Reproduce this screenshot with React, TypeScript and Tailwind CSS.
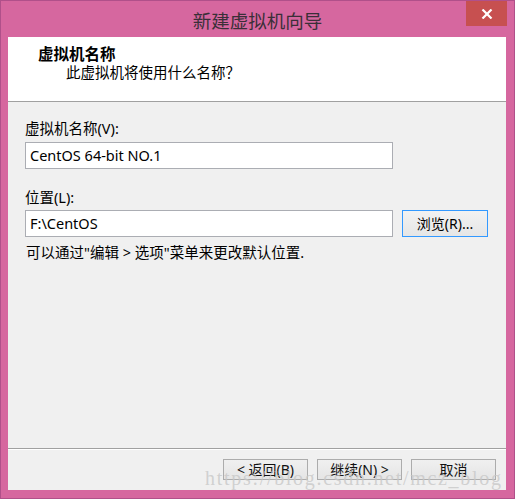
import React from 'react'

const ui = { fontFamily: '"Segoe UI", "Noto Sans", "Noto Sans CJK SC", sans-serif' }
const cjk = { fontFamily: '"Noto Sans CJK SC", "Noto Sans", sans-serif' }

const WizardButton: React.FC<{ children: React.ReactNode }> = ({ children }) => (
	<button
		className="w-[85px] h-[21px] border border-[#acacac] bg-gradient-to-b from-[#f0f0f0] to-[#e5e5e5] text-[14px] leading-[19px] text-[#111] flex items-center justify-center"
		style={ui}
	>
		{children}
	</button>
)

const App: React.FC = () => {
	return (
		<div className="w-[515px] h-[499px] bg-[#d6679f] border border-[#b0508a] flex flex-col relative overflow-hidden">
			{/* title bar */}
			<div className="h-[36px] flex items-center justify-center relative">
				<span className="text-[18.5px] leading-[22px] text-[#3a2f38] pt-[1px]" style={cjk}>新建虚拟机向导</span>
				<button className="absolute right-[7px] top-0 w-[41px] h-[25px] bg-[#c75050] flex items-center justify-center">
					<svg width="12" height="10" viewBox="0 0 12 10">
						<path d="M1.5 0.5 L10.5 9.5 M10.5 0.5 L1.5 9.5" stroke="#ffffff" strokeWidth="2.2" />
					</svg>
				</button>
			</div>

			{/* client area */}
			<div className="flex-1 ml-[7px] mr-[8px] mb-[8px] bg-[#f0f0f0] flex flex-col text-[#000]" style={ui}>
				<div className="h-[65px] shrink-0 bg-white border-b border-[#a0a0a0] pt-[7px]">
					<div className="pl-[30px] text-[15.5px] leading-[18px] font-bold" style={cjk}>虚拟机名称</div>
					<div className="pl-[58px] mt-[1px] text-[14.5px] leading-[18px]" style={cjk}>此虚拟机将使用什么名称？</div>
				</div>

				<div className="flex-1 px-[17px] pt-[17px]">
					<div className="text-[14.5px] leading-[18px]">虚拟机名称(V):</div>
					<div className="mt-[5px] w-[368px] h-[27px] bg-white border border-[#abadb3] pl-[4px] flex items-center text-[14.5px]">
						CentOS 64-bit NO.1
					</div>

					<div className="mt-[19px] text-[14.5px] leading-[18px]">位置(L):</div>
					<div className="mt-[4px] flex gap-[9px]">
						<div className="w-[368px] h-[27px] bg-white border border-[#abadb3] pl-[4px] flex items-center text-[14.5px]">
							F:\CentOS
						</div>
						<button className="w-[86px] h-[27px] border border-[#3399ff] bg-gradient-to-b from-[#f2f2f2] to-[#e6e6e6] text-[14px] flex items-center justify-center">
							浏览(R)...
						</button>
					</div>
					<div className="mt-[6px] pl-[1px] text-[14.5px] leading-[18px]">可以通过"编辑 &gt; 选项"菜单来更改默认位置.</div>
				</div>

				<div className="border-t border-[#a0a0a0]">
					<div className="border-t border-white" />
				</div>
				<div className="h-[40px] pt-[9px] pr-[10px] flex justify-end gap-[9px]">
					<WizardButton>&lt; 返回(B)</WizardButton>
					<WizardButton>继续(N) &gt;</WizardButton>
					<WizardButton>取消</WizardButton>
				</div>
			</div>

			{/* watermark */}
			<div
				className="absolute left-[204px] top-[467px] text-[20px] leading-[20px] tracking-[1.7px] text-[#c8c8c8]/80 pointer-events-none"
				style={{ fontFamily: '"Liberation Serif", serif' }}
			>
				https://blog.csdn.net/mcz_blog
			</div>
		</div>
	)
}

export default App
